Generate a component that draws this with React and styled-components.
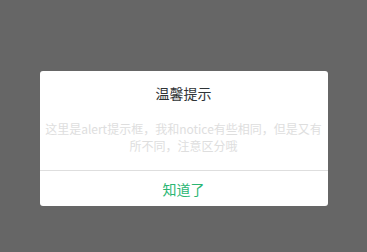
import React from 'react';
import styled, { createGlobalStyle } from 'styled-components';

const GlobalStyle = createGlobalStyle`
  *, *:before, *:after {
    margin: 0;
    padding: 0;
    box-sizing: border-box;
  }

  html, body, #root {
    height: 100%;
  }

  body {
    font-family: 'Noto Sans CJK SC', 'Liberation Sans', sans-serif;
    background: #666;
  }
`;

const Mask = styled.div`
  height: 100%;
  display: flex;
  justify-content: center;
  align-items: flex-start;
  padding-top: 71px;
  background: #666;
`;

const Dialog = styled.div`
  width: 288px;
  background: #fff;
  border-radius: 3px;
  overflow: hidden;
  text-align: center;
`;

const Title = styled.div`
  padding-top: 12px;
  font-size: 14px;
  line-height: 20px;
  color: #2f3437;
`;

const Content = styled.div`
  padding: 17px 2px 16px;
  font-size: 12px;
  line-height: 17px;
  color: #dedede;
`;

const Footer = styled.div`
  border-top: 1px solid #dedede;
  height: 36px;
  display: flex;
  align-items: center;
  justify-content: center;
`;

const Button = styled.button`
  border: none;
  background: transparent;
  font-family: inherit;
  font-size: 14px;
  color: #2bb673;
  cursor: pointer;
`;

const App = () => (
  <React.Fragment>
    <GlobalStyle />
    <Mask>
      <Dialog>
        <Title>温馨提示</Title>
        <Content>这里是alert提示框，我和notice有些相同，但是又有所不同，注意区分哦</Content>
        <Footer>
          <Button>知道了</Button>
        </Footer>
      </Dialog>
    </Mask>
  </React.Fragment>
);

export default App;
